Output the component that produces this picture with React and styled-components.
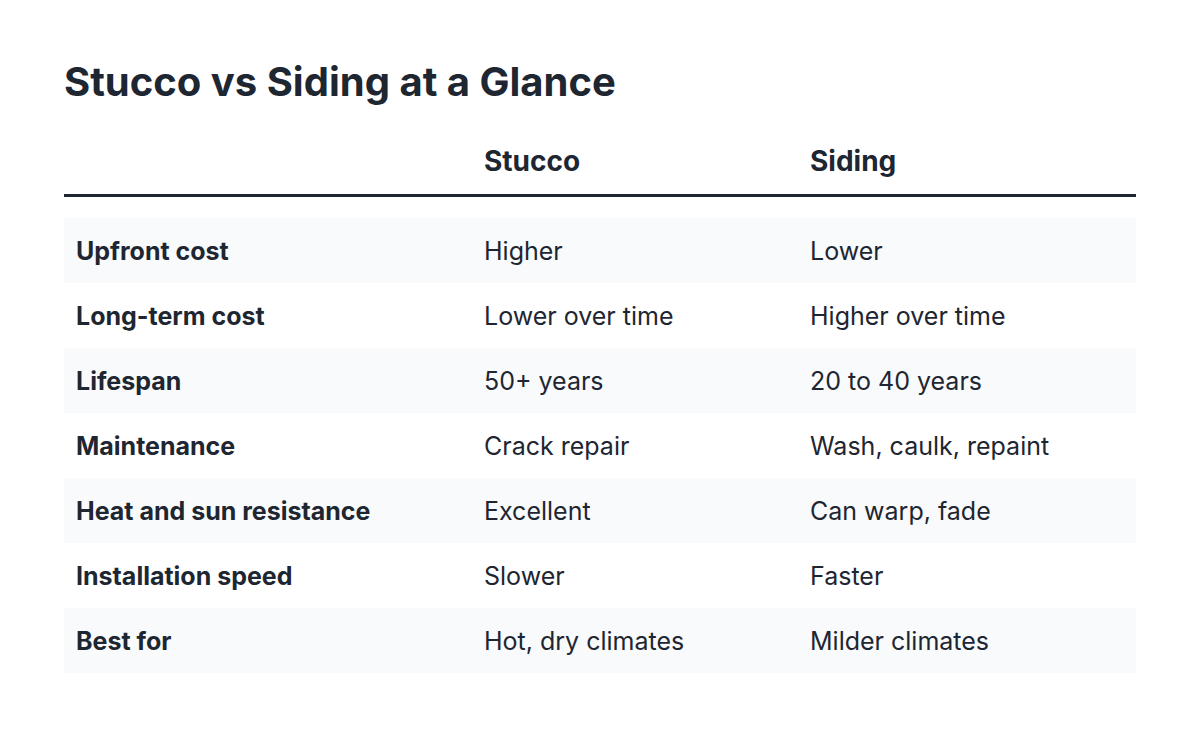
import React from 'react'
import styled, { createGlobalStyle } from 'styled-components'

const GlobalStyle = createGlobalStyle`
  body {
    margin: 0;
    background: #ffffff;
    font-family: Inter, "Noto Sans", sans-serif;
    color: #1e2631;
  }
`

const Page = styled.div`
  padding: 58px 64px 40px;
  width: 1072px;
`

const Title = styled.h2`
  margin: 0 0 38px;
  font-size: 40px;
  line-height: 48px;
  font-weight: 700;
  color: #1e2631;
`

const Grid = styled.div`
  display: grid;
  grid-template-columns: 408px 326px 1fr;
`

const HeadRow = styled.div`
  display: contents;
`

const HeadCell = styled.div`
  padding: 0 12px 16px;
  font-size: 28px;
  line-height: 34px;
  font-weight: 700;
  border-bottom: 3px solid #1e2631;
  margin-bottom: 21px;
`

const Row = styled.div`
  display: contents;
  & > div {
    background: ${({ shaded }) => (shaded ? '#f8fafc' : 'transparent')};
  }
`

const Cell = styled.div`
  height: 65px;
  display: flex;
  align-items: center;
  padding: 0 12px;
  font-size: 25px;
  font-weight: ${({ label }) => (label ? 700 : 400)};
  color: #1e2631;
`

const rows = [
  ['Upfront cost', 'Higher', 'Lower'],
  ['Long-term cost', 'Lower over time', 'Higher over time'],
  ['Lifespan', '50+ years', '20 to 40 years'],
  ['Maintenance', 'Crack repair', 'Wash, caulk, repaint'],
  ['Heat and sun resistance', 'Excellent', 'Can warp, fade'],
  ['Installation speed', 'Slower', 'Faster'],
  ['Best for', 'Hot, dry climates', 'Milder climates'],
]

export default function App() {
  return (
    <Page>
      <GlobalStyle />
      <Title>Stucco vs Siding at a Glance</Title>
      <Grid>
        <HeadRow>
          <HeadCell />
          <HeadCell>Stucco</HeadCell>
          <HeadCell>Siding</HeadCell>
        </HeadRow>
        {rows.map((r, i) => (
          <Row key={r[0]} shaded={i % 2 === 0}>
            <Cell label>{r[0]}</Cell>
            <Cell>{r[1]}</Cell>
            <Cell>{r[2]}</Cell>
          </Row>
        ))}
      </Grid>
    </Page>
  )
}
